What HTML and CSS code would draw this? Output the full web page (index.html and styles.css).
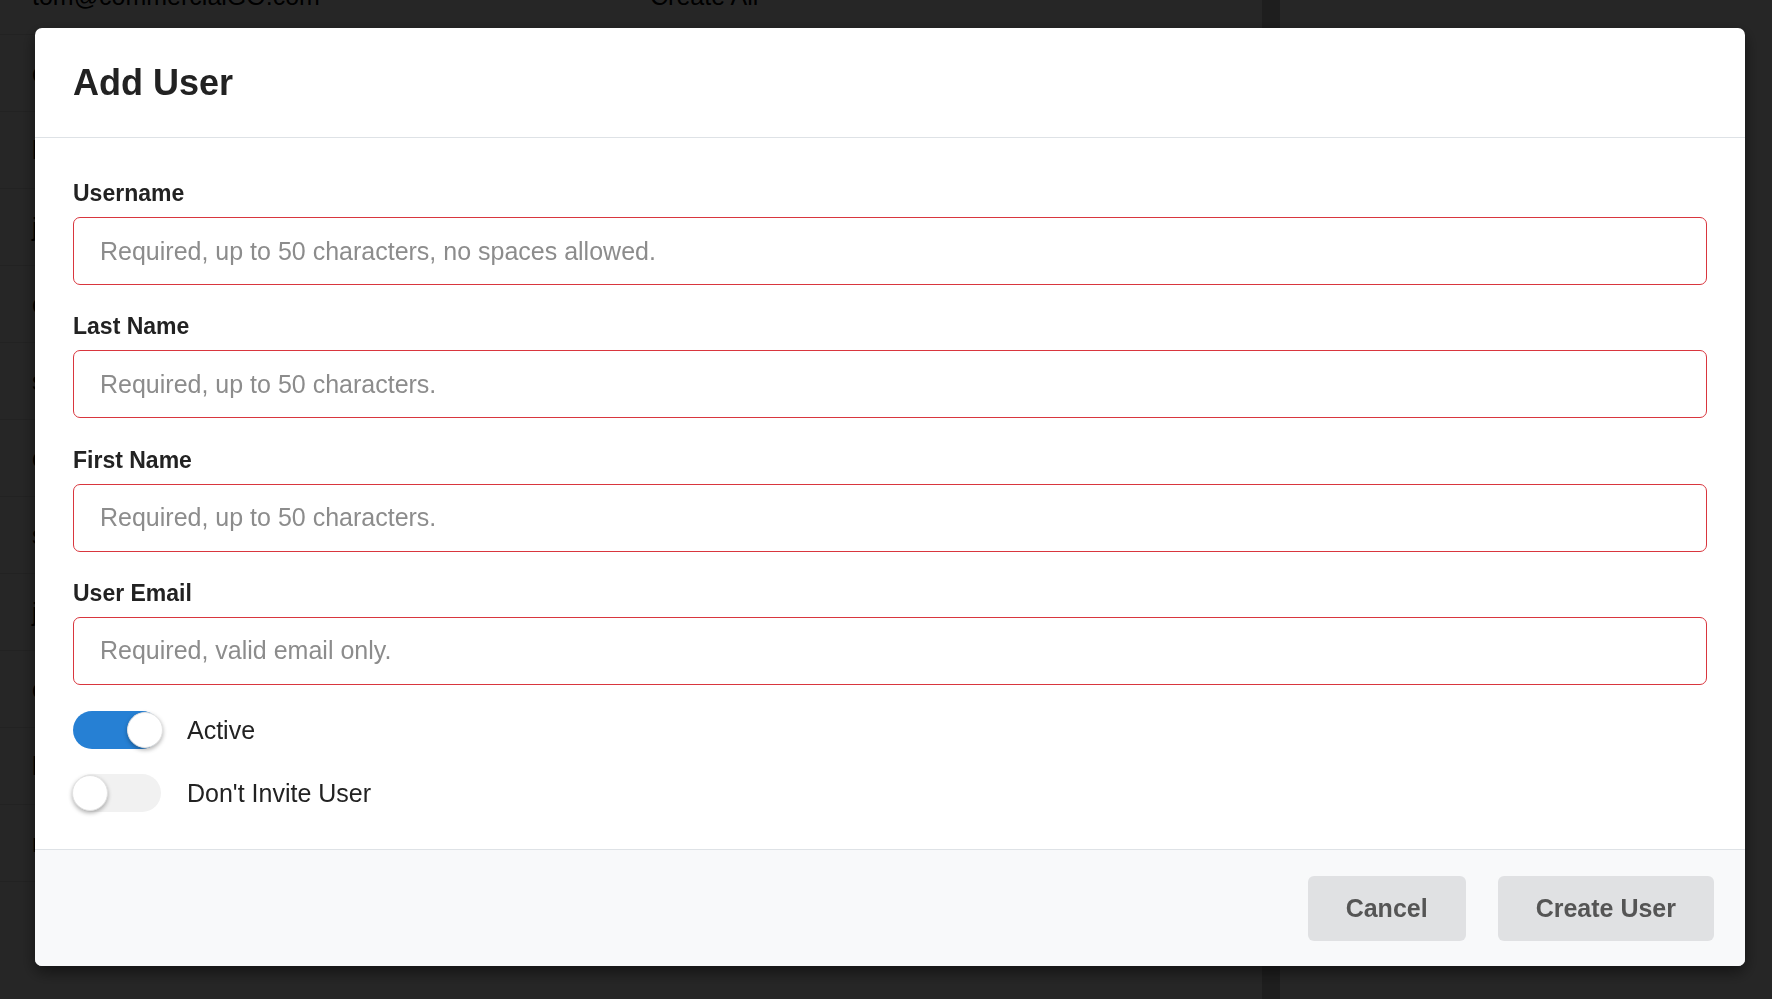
FILE: index.html
```
<!DOCTYPE html>
<html lang="en">
<head>
<meta charset="UTF-8">
<meta name="viewport" content="width=device-width, initial-scale=1.0">
<title>Users - Add User</title>
<link rel="stylesheet" href="styles.css">
</head>
<body>
  <div class="page">
    <div class="table-wrap">
      <div class="row"><span class="col-email">tom@commercialGO.com</span><span class="col-role">Create All</span></div>
      <div class="row"><span class="col-email">claire@commercialGO.com</span><span class="col-role">Read Only</span></div>
      <div class="row"><span class="col-email">lisa@commercialGO.com</span><span class="col-role">Create All</span></div>
      <div class="row"><span class="col-email">james@commercialGO.com</span><span class="col-role">Admin</span></div>
      <div class="row"><span class="col-email">carl@commercialGO.com</span><span class="col-role">Read Only</span></div>
      <div class="row"><span class="col-email">sarah@commercialGO.com</span><span class="col-role">Create All</span></div>
      <div class="row"><span class="col-email">chris@commercialGO.com</span><span class="col-role">Admin</span></div>
      <div class="row"><span class="col-email">steve@commercialGO.com</span><span class="col-role">Read Only</span></div>
      <div class="row"><span class="col-email">jane@commercialGO.com</span><span class="col-role">Create All</span></div>
      <div class="row"><span class="col-email">chloe@commercialGO.com</span><span class="col-role">Read Only</span></div>
      <div class="row"><span class="col-email">liam@commercialGO.com</span><span class="col-role">Admin</span></div>
      <div class="row"><span class="col-email">mark@commercialGO.com</span><span class="col-role">Create All</span></div>
    </div>
    <div class="scroll-band"></div>
    <div class="side"></div>
  </div>

  <div class="backdrop"></div>

  <div class="modal-layer">
    <div class="modal">
      <div class="modal-header">
        <h2 class="modal-title">Add User</h2>
      </div>

      <div class="modal-body">
        <div class="fields">
          <div class="field">
            <label class="field-label" for="username">Username</label>
            <input class="field-input" id="username" type="text" placeholder="Required, up to 50 characters, no spaces allowed.">
          </div>
          <div class="field">
            <label class="field-label" for="lastName">Last Name</label>
            <input class="field-input" id="lastName" type="text" placeholder="Required, up to 50 characters.">
          </div>
          <div class="field">
            <label class="field-label" for="firstName">First Name</label>
            <input class="field-input" id="firstName" type="text" placeholder="Required, up to 50 characters.">
          </div>
          <div class="field">
            <label class="field-label" for="email">User Email</label>
            <input class="field-input" id="email" type="email" placeholder="Required, valid email only.">
          </div>
        </div>

        <div class="toggles">
          <div class="toggle-row">
            <span class="switch on"><span class="knob"></span></span>
            <span class="toggle-label">Active</span>
          </div>
          <div class="toggle-row">
            <span class="switch"><span class="knob"></span></span>
            <span class="toggle-label">Don't Invite User</span>
          </div>
        </div>
      </div>

      <div class="modal-footer">
        <button class="btn">Cancel</button>
        <button class="btn">Create User</button>
      </div>
    </div>
  </div>
</body>
</html>
```
FILE: styles.css
```
* {
  box-sizing: border-box;
  margin: 0;
  padding: 0;
}

body {
  font-family: "Liberation Sans", Arial, sans-serif;
  background-color: #fff;
  height: 100vh;
  overflow: hidden;
}

/* page behind the dialog */
.page {
  display: flex;
  margin-top: -42px;
  height: calc(100vh + 42px);
}

.table-wrap {
  width: 1262px;
}

.row {
  display: flex;
  align-items: center;
  height: 77px;
  padding-left: 32px;
  border-bottom: 1px solid #e4e4e4;
  font-size: 25px;
  color: #000;
}

.col-email {
  width: 618px;
}

.scroll-band {
  width: 18px;
  background-color: #c6c6c6;
}

.side {
  flex: 1;
}

.backdrop {
  position: fixed;
  inset: 0;
  background-color: rgba(0, 0, 0, 0.85);
}

/* dialog */
.modal-layer {
  position: fixed;
  inset: 0;
  padding: 28px 0 0 35px;
}

.modal {
  width: 1710px;
  background-color: #fff;
  border-radius: 7px;
  box-shadow: 0 6px 16px rgba(0, 0, 0, 0.5);
  overflow: hidden;
}

.modal-header {
  height: 110px;
  display: flex;
  align-items: center;
  padding: 0 38px;
  border-bottom: 1px solid #dee2e6;
}

.modal-title {
  font-size: 36px;
  font-weight: bold;
  color: #222;
  line-height: 1.2;
}

.modal-body {
  padding: 42px 38px 37px;
}

.fields {
  display: flex;
  flex-direction: column;
  gap: 28.33px;
}

.field-label {
  display: block;
  font-size: 23px;
  font-weight: bold;
  line-height: 27px;
  color: #222;
  margin-bottom: 10px;
}

.field-input {
  display: block;
  width: 100%;
  height: 68px;
  padding: 0 26px;
  border: 1px solid #d9363e;
  border-radius: 7px;
  font-family: inherit;
  font-size: 25px;
  color: #333;
  outline: none;
}

.field-input::placeholder {
  color: #8c8c8c;
}

.toggles {
  display: flex;
  flex-direction: column;
  gap: 25px;
  margin-top: 26px;
}

.toggle-row {
  display: flex;
  align-items: center;
  gap: 26px;
}

.switch {
  position: relative;
  width: 88px;
  height: 38px;
  border-radius: 19px;
  background-color: #f1f1f1;
}

.switch.on {
  background-color: #2680d4;
}

.knob {
  position: absolute;
  top: 1px;
  left: -1px;
  width: 36px;
  height: 36px;
  border-radius: 50%;
  background-color: #fff;
  border: 1px solid #e2e2e2;
  box-shadow: 0 2px 4px rgba(0, 0, 0, 0.3);
}

.switch.on .knob {
  left: 54px;
}

.toggle-label {
  font-size: 25px;
  line-height: 38px;
  color: #222;
}

.modal-footer {
  display: flex;
  justify-content: flex-end;
  gap: 32px;
  padding: 26px 31px 25px;
  background-color: #f8f9fa;
  border-top: 1px solid #dee2e6;
}

.btn {
  height: 65px;
  padding: 0 38px;
  border: none;
  border-radius: 6px;
  background-color: #e0e1e3;
  font-family: inherit;
  font-size: 25px;
  font-weight: bold;
  color: #555;
  cursor: pointer;
}
```
